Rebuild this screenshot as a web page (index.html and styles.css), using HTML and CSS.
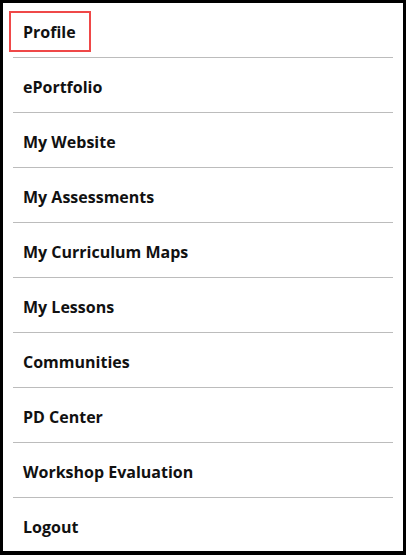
FILE: index.html
```html
<!DOCTYPE html>
<html>
<head>
<meta charset="utf-8">
<link rel="stylesheet" href="styles.css">
</head>
<body>
<nav class="menu">
  <ul class="menu-list">
    <li class="menu-item"><a class="menu-link highlight" href="#">Profile</a></li>
    <li class="menu-item"><a class="menu-link" href="#">ePortfolio</a></li>
    <li class="menu-item"><a class="menu-link" href="#">My Website</a></li>
    <li class="menu-item"><a class="menu-link" href="#">My Assessments</a></li>
    <li class="menu-item"><a class="menu-link" href="#">My Curriculum Maps</a></li>
    <li class="menu-item"><a class="menu-link" href="#">My Lessons</a></li>
    <li class="menu-item"><a class="menu-link" href="#">Communities</a></li>
    <li class="menu-item"><a class="menu-link" href="#">PD Center</a></li>
    <li class="menu-item"><a class="menu-link" href="#">Workshop Evaluation</a></li>
    <li class="menu-item"><a class="menu-link" href="#">Logout</a></li>
  </ul>
</nav>
</body>
</html>
```

FILE: styles.css
```css
* { box-sizing: border-box; }
html, body { margin: 0; padding: 0; background: #fff; }
.menu {
  width: 406px;
  height: 555px;
  border: 3px solid #000;
  border-bottom-width: 4px;
  padding: 0 10px;
  font-family: "Open Sans", "Liberation Sans", sans-serif;
  font-weight: 700;
  font-size: 16px;
  color: #111;
}
.menu-list { list-style: none; margin: 0; padding: 0; }
.menu-item {
  height: 55px;
  border-bottom: 1px solid #bcbcbc;
  display: flex;
  align-items: center;
  padding: 3px 0 0 10px;
}
.menu-item:last-child { border-bottom: none; }
.menu-link { color: #111; text-decoration: none; line-height: 20px; }
.menu-link.highlight {
  display: inline-block;
  margin-left: -14px;
  padding: 9px 13px 8px 12px;
  border: 2px solid #ef4848;
}
```
